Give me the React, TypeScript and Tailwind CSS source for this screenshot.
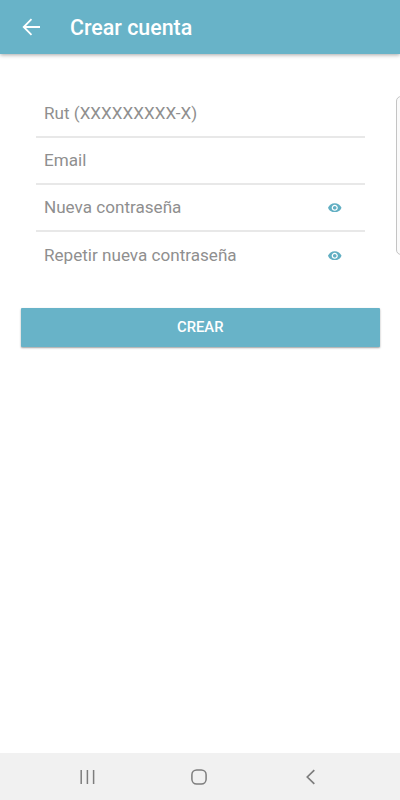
import React from "react";

function EyeIcon() {
  return (
    <svg viewBox="1 4.5 22 15" className="h-[9.5px] w-[13.5px] shrink-0 fill-[#62afc3]" aria-hidden="true">
      <path d="M12 4.5C7 4.5 2.73 7.61 1 12c1.73 4.39 6 7.5 11 7.5s9.27-3.11 11-7.5c-1.73-4.39-6-7.5-11-7.5zM12 17c-2.76 0-5-2.24-5-5s2.24-5 5-5 5 2.24 5 5-2.24 5-5 5zm0-8c-1.66 0-3 1.34-3 3s1.34 3 3 3 3-1.34 3-3-1.34-3-3-3z" />
    </svg>
  );
}

type FieldProps = { label: string; secret?: boolean; last?: boolean };

function Field({ label, secret, last }: FieldProps) {
  return (
    <div
      className={`flex h-[47.2px] items-center justify-between pr-[23.5px] pl-2 ${
        last ? "pb-px" : "border-b-2 border-[#e8e8e8]"
      }`}
    >
      <span className={`text-[17.1px] leading-5 whitespace-nowrap text-[#8f8f8f] ${secret ? "mb-px" : ""}`}>
        {label}
      </span>
      {secret && <EyeIcon />}
    </div>
  );
}

export default function App() {
  return (
    <div className="relative flex h-[800px] w-[400px] flex-col overflow-hidden bg-white font-['Roboto',sans-serif]">
      <header className="flex h-[54px] shrink-0 items-center bg-[#68b3c8] pl-[22px] text-white shadow-[0_1px_4px_rgba(0,0,0,0.35)]">
        <svg viewBox="0 0 18 18" className="h-[18px] w-[18px]" fill="none" stroke="currentColor" strokeWidth="1.8" aria-hidden="true">
          <path d="M18 9H2M9.5 1.2 1.7 9l7.8 7.8" />
        </svg>
        <h1 className="mt-px ml-[30px] text-[21.4px] leading-6 font-medium">Crear cuenta</h1>
      </header>

      <main className="grow pt-[36.6px]">
        <form className="mr-[35px] ml-9">
          <Field label="Rut (XXXXXXXXX-X)" />
          <Field label="Email" />
          <Field label="Nueva contraseña" secret />
          <Field label="Repetir nueva contraseña" secret last />
        </form>
        <button
          type="button"
          className="mt-[28.6px] ml-[20.5px] flex h-[39px] w-[359.5px] items-center justify-center rounded-[1px] bg-[#68b3c8] text-[14.8px] font-medium text-white shadow-[0_1px_2px_rgba(0,0,0,0.38)]"
        >
          CREAR
        </button>
      </main>

      <div className="absolute top-[96px] left-[396px] h-[159px] w-3 rounded-[5px] border border-[#c4c4c4] bg-[#fafafa]" />

      <nav className="flex h-[47px] shrink-0 items-center bg-[#f1f1f1] pl-20">
        <svg viewBox="0 0 15 16" className="h-4 w-[15px]" stroke="#7d7d7d" strokeWidth="1.5" aria-hidden="true">
          <path d="M1.2 1v14M7.4 1v14M13.6 1v14" />
        </svg>
        <svg viewBox="0 0 16 16" className="ml-24 h-4 w-4" fill="none" stroke="#7d7d7d" strokeWidth="1.5" aria-hidden="true">
          <rect x="0.9" y="0.9" width="14.2" height="14.2" rx="4.8" />
        </svg>
        <svg viewBox="0 0 9 16" className="ml-[99px] h-4 w-[9px]" fill="none" stroke="#7d7d7d" strokeWidth="1.7" aria-hidden="true">
          <path d="M8.3 1.2 1.3 8l7 6.8" />
        </svg>
      </nav>
    </div>
  );
}
